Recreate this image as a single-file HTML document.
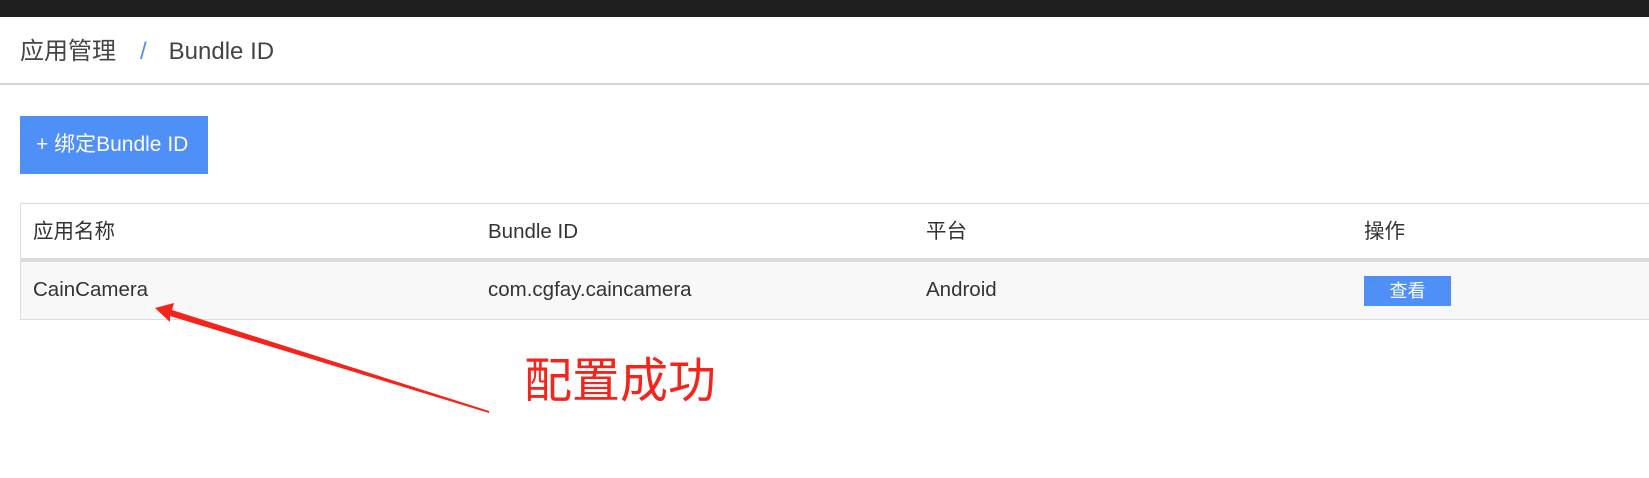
<!DOCTYPE html>
<html><head><meta charset="utf-8"><style>
*{margin:0;padding:0;box-sizing:border-box}
body{width:1649px;height:478px;background:#fff;position:relative;overflow:hidden;font-family:"Liberation Sans","Noto Sans CJK SC",sans-serif;color:#333}
.top{position:absolute;left:0;top:0;width:1649px;height:17px;background:#1e1e1e}
.bc{position:absolute;left:20px;top:38px;font-size:24px;line-height:28px;color:#444;white-space:nowrap}
.bc .s{color:#4e8ff8;margin:0 22px 0 24px}
.hr{position:absolute;left:0;top:83px;width:1649px;height:2px;background:#d4d4d4}
.btn{position:absolute;left:20px;top:116px;width:188px;height:58px;background:#4e8ff8;color:#fff;font-size:21px;line-height:58px;padding-left:16px;white-space:nowrap}
.tbl{position:absolute;left:20px;top:203px;width:1640px;height:117px;border:1px solid #dcdcdc}
.hd{position:absolute;left:0;top:0;width:100%;height:58px;border-bottom:4px solid #dcdcdc;background:#fff}
.rw{position:absolute;left:0;top:58px;width:100%;height:57px;background:#f8f8f8}
.c{position:absolute;font-size:20.5px;line-height:24px;color:#333;white-space:nowrap}
.vb{position:absolute;left:1343px;top:14px;width:87px;height:30px;background:#4e8ff8;color:#fff;font-size:18px;text-align:center;line-height:30px}
.red{position:absolute;left:524px;top:352px;font-size:48px;line-height:60px;color:#f4241c;white-space:nowrap}
</style></head><body>
<div class="top"></div>
<div class="bc">应用管理<span class="s">/</span>Bundle ID</div>
<div class="hr"></div>
<div class="btn">+ 绑定Bundle ID</div>
<div class="tbl">
 <div class="hd">
  <div class="c" style="left:12px;top:16px">应用名称</div>
  <div class="c" style="left:467px;top:16px">Bundle ID</div>
  <div class="c" style="left:905px;top:16px">平台</div>
  <div class="c" style="left:1343px;top:16px">操作</div>
 </div>
 <div class="rw">
  <div class="c" style="left:12px;top:16px">CainCamera</div>
  <div class="c" style="left:467px;top:16px">com.cgfay.caincamera</div>
  <div class="c" style="left:905px;top:16px">Android</div>
  <div class="vb">查看</div>
 </div>
</div>
<svg style="position:absolute;left:0;top:0" width="1649" height="478">
 <polygon points="489,413 489,411 172,310 174,303 155,308 170,322 170,316" fill="#f4241c"/>
</svg>
<div class="red">配置成功</div>
</body></html>
